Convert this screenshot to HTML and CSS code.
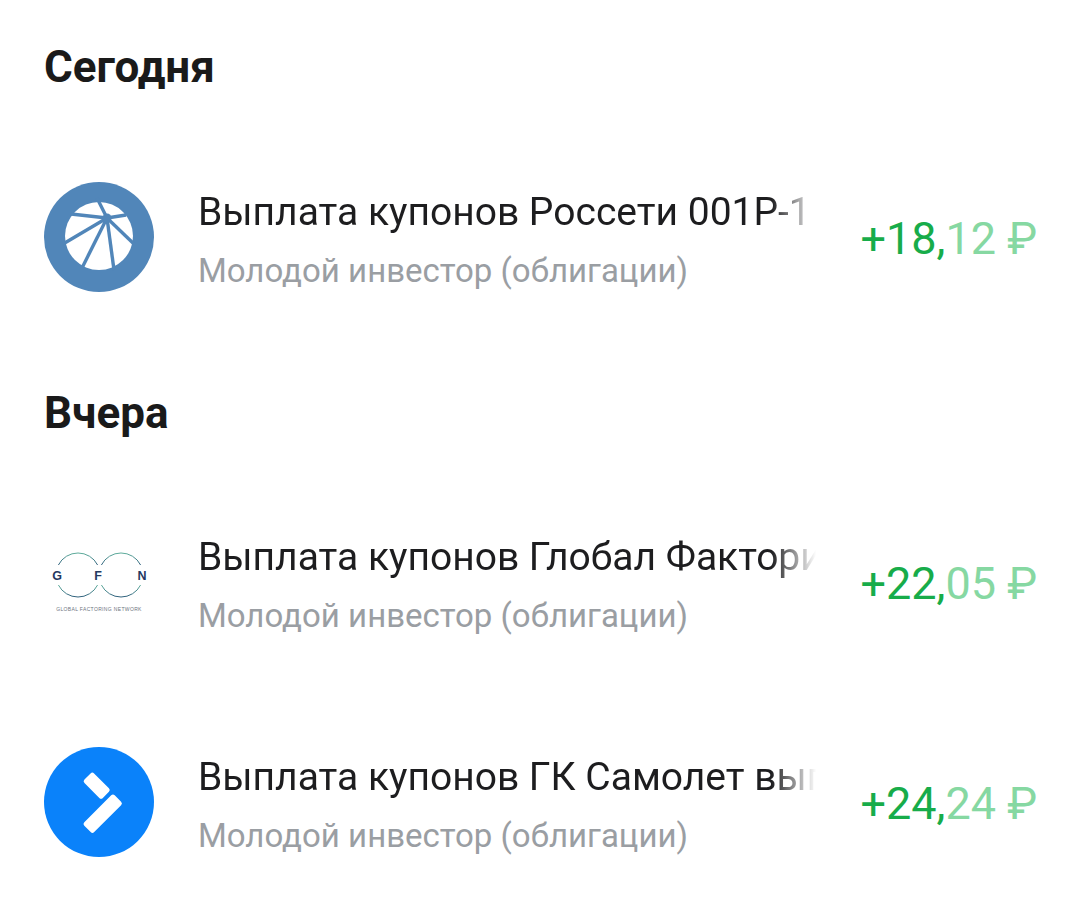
FILE: index.html
```html
<!DOCTYPE html>
<html lang="ru">
<head>
    <meta charset="UTF-8">
    <meta name="viewport" content="width=device-width, initial-scale=1.0">
    <title>Операции</title>
    <link rel="stylesheet" href="styles.css">
</head>
<body>

    <div class="feed">
        <h2 class="day-title">Сегодня</h2>

        <div class="op-row">
            <svg class="op-icon" viewBox="0 0 110 110">
                <circle cx="55" cy="55" r="55" fill="#5186b9"/>
                <circle cx="55" cy="54" r="34" fill="#fff"/>
                <g stroke="#5186b9" stroke-width="3.4" fill="none">
                    <path d="M63 36 L53 16"/>
                    <path d="M63 36 L27 32"/>
                    <path d="M63 36 L19 62"/>
                    <path d="M63 36 L38 86"/>
                    <path d="M63 36 L70 88"/>
                    <path d="M63 36 L90 62"/>
                    <path d="M63 36 L82 33"/>
                </g>
                <circle cx="63" cy="36" r="4.5" fill="#5186b9"/>
            </svg>
            <div class="op-text">
                <div class="op-name">Выплата купонов Россети 001Р-1</div>
                <div class="op-sub">Молодой инвестор (облигации)</div>
            </div>
            <div class="op-sum">+18,<span class="op-sum-light">12 ₽</span></div>
        </div>

        <h2 class="day-title day-title-tight">Вчера</h2>

        <div class="op-row">
            <svg class="op-icon" viewBox="0 0 110 110">
                <defs>
                    <linearGradient id="gfnLine" x1="0" y1="0" x2="0" y2="1">
                        <stop offset="0" stop-color="#5fae9c"/>
                        <stop offset="1" stop-color="#2f5f7c"/>
                    </linearGradient>
                </defs>
                <g stroke="url(#gfnLine)" stroke-width="1" fill="none">
                    <path d="M14.400 38 A22 22 0 0 1 53.600 38"/>
                    <path d="M14.400 58 A22 22 0 0 0 53.600 58"/>
                    <path d="M57.400 38 A22 22 0 0 1 96.600 38"/>
                    <path d="M57.400 58 A22 22 0 0 0 96.600 58"/>
                </g>
                <text class="gfn-letter" x="13" y="52.500">G</text>
                <text class="gfn-letter" x="54" y="52.500">F</text>
                <text class="gfn-letter" x="98" y="52.500">N</text>
                <text class="gfn-small" x="55" y="84" text-anchor="middle">GLOBAL FACTORING NETWORK</text>
            </svg>
            <div class="op-text">
                <div class="op-name">Выплата купонов Глобал Фактори</div>
                <div class="op-sub">Молодой инвестор (облигации)</div>
            </div>
            <div class="op-sum">+22,<span class="op-sum-light">05 ₽</span></div>
        </div>

        <div class="op-row op-row-next">
            <svg class="op-icon" viewBox="0 0 110 110">
                <circle cx="55" cy="55" r="55" fill="#0a82fa"/>
                <g fill="#fff">
                    <rect x="-13" y="-6.800" width="26" height="13.600" rx="2.500" transform="translate(52.700 38.700) rotate(45)"/>
                    <rect x="-21.500" y="-7" width="43" height="14" rx="2.500" transform="translate(58.700 66.700) rotate(-45)"/>
                </g>
            </svg>
            <div class="op-text">
                <div class="op-name">Выплата купонов ГК Самолет вып</div>
                <div class="op-sub">Молодой инвестор (облигации)</div>
            </div>
            <div class="op-sum">+24,<span class="op-sum-light">24 ₽</span></div>
        </div>
    </div>

</body>
</html>
```

FILE: styles.css
```css
body {
    font-family: Roboto, 'Noto Sans', sans-serif;
    margin: 0;
    padding: 0;
    background-color: #fff;
    color: #1d1d1f;
}

.feed {
    padding: 41px 43px 0 44px;
}

/* Day headers */
.day-title {
    margin: 0;
    font-size: 44px;
    line-height: 52px;
    font-weight: 700;
    color: #1a1a1a;
}

.day-title-tight {
    margin-bottom: -1px;
}

/* Operation row */
.op-row {
    display: flex;
    align-items: center;
    height: 110px;
    margin-top: 89px;
    margin-bottom: 95px;
}

.op-row-next {
    margin-top: 110px;
}

.op-icon {
    width: 110px;
    height: 110px;
    flex-shrink: 0;
    margin-right: 44px;
}

.op-text {
    flex: 1;
    min-width: 0;
    padding-top: 5px;
    overflow: hidden;
    white-space: nowrap;
}

.op-name {
    font-size: 39px;
    line-height: 48px;
    color: #1d1d1f;
    overflow: hidden;
    -webkit-mask-image: linear-gradient(to left, transparent 0, #000 45px);
    mask-image: linear-gradient(to left, transparent 0, #000 45px);
}

.op-sub {
    font-size: 33px;
    line-height: 40px;
    margin-top: 15px;
    color: #9a9ea3;
}

.op-sum {
    flex-shrink: 0;
    margin-left: 44px;
    padding-top: 4px;
    font-size: 45px;
    line-height: 52px;
    color: #17ac4a;
    white-space: nowrap;
}

.op-sum-light {
    color: #86d8a2;
}

/* GFN logo text */
.gfn-letter {
    font-family: 'Liberation Sans', sans-serif;
    font-size: 12.500px;
    font-weight: 700;
    fill: #24385f;
    text-anchor: middle;
}

.gfn-small {
    font-family: 'Liberation Sans', sans-serif;
    font-size: 5px;
    letter-spacing: 0.35px;
    fill: #6d7480;
}
```
